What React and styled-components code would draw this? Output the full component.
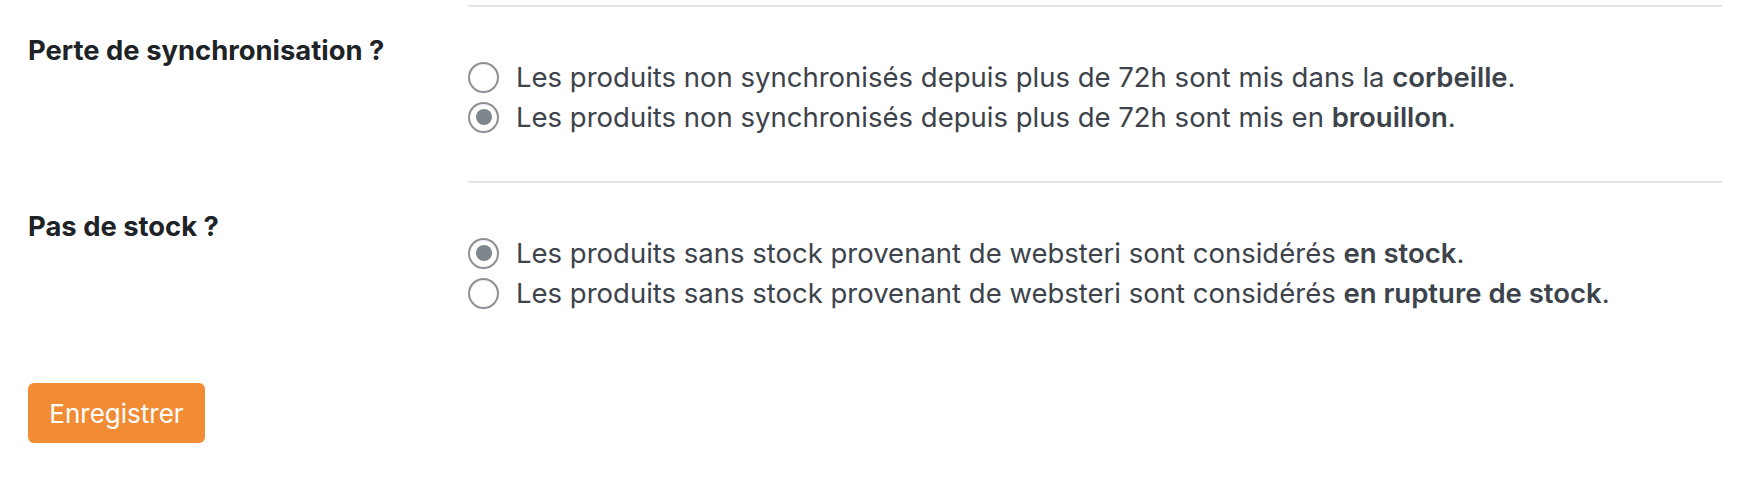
import React from 'react';
import styled, { createGlobalStyle } from 'styled-components';

const GlobalStyle = createGlobalStyle`
  body {
    margin: 0;
    background: #ffffff;
    font-family: Inter, "Liberation Sans", Arial, sans-serif;
    color: #3c434a;
  }
`;

const Page = styled.form`
  display: flex;
  flex-direction: column;
  padding: 5px 26px 0 28px;
`;

const Row = styled.div`
  display: grid;
  grid-template-columns: 440px 1fr;
`;

const Label = styled.div`
  padding-top: 28px;
  font-size: 27.4px;
  line-height: 34px;
  font-weight: 700;
  color: #1d2327;
`;

const Field = styled.div`
  border-top: 1px solid #dcdcde;
  box-shadow: inset 0 1px 0 #ececed;
  padding: 51px 0 44px;
  display: flex;
  flex-direction: column;
`;

const Option = styled.label`
  display: flex;
  align-items: center;
  gap: 17px;
  font-size: 27.5px;
  line-height: 40px;
  color: #3c434a;
  cursor: pointer;

  strong {
    font-weight: 600;
  }
`;

const Radio = styled.span`
  flex: none;
  display: flex;
  align-items: center;
  justify-content: center;
  box-sizing: border-box;
  width: 31px;
  height: 31px;
  border-radius: 50%;
  border: 2px solid #8c8f94;
  background: #ffffff;
  box-shadow: inset 0 1px 2px rgba(0, 0, 0, 0.08);

  &::after {
    content: '';
    display: ${(props) => (props.checked ? 'block' : 'none')};
    width: 16px;
    height: 16px;
    border-radius: 50%;
    background: #7f868e;
  }
`;

const Footer = styled.div`
  padding-top: 26px;
`;

const SaveButton = styled.button`
  width: 177px;
  height: 60px;
  border: 0;
  border-radius: 6px;
  background: #f18c34;
  color: #ffffff;
  font-family: Inter, "Liberation Sans", Arial, sans-serif;
  font-size: 26px;
  cursor: pointer;
`;

const sections = [
  {
    label: 'Perte de synchronisation ?',
    options: [
      { text: 'Les produits non synchronisés depuis plus de 72h sont mis dans la ', bold: 'corbeille', checked: false },
      { text: 'Les produits non synchronisés depuis plus de 72h sont mis en ', bold: 'brouillon', checked: true },
    ],
  },
  {
    label: 'Pas de stock ?',
    options: [
      { text: 'Les produits sans stock provenant de websteri sont considérés ', bold: 'en stock', checked: true },
      { text: 'Les produits sans stock provenant de websteri sont considérés ', bold: 'en rupture de stock', checked: false },
    ],
  },
];

export default function App() {
  return (
    <>
      <GlobalStyle />
      <Page onSubmit={(e) => e.preventDefault()}>
        {sections.map((section) => (
          <Row key={section.label}>
            <Label>{section.label}</Label>
            <Field>
              {section.options.map((option) => (
                <Option key={option.bold}>
                  <Radio checked={option.checked} />
                  <span>
                    {option.text}
                    <strong>{option.bold}</strong>.
                  </span>
                </Option>
              ))}
            </Field>
          </Row>
        ))}
        <Footer>
          <SaveButton type="submit">Enregistrer</SaveButton>
        </Footer>
      </Page>
    </>
  );
}
